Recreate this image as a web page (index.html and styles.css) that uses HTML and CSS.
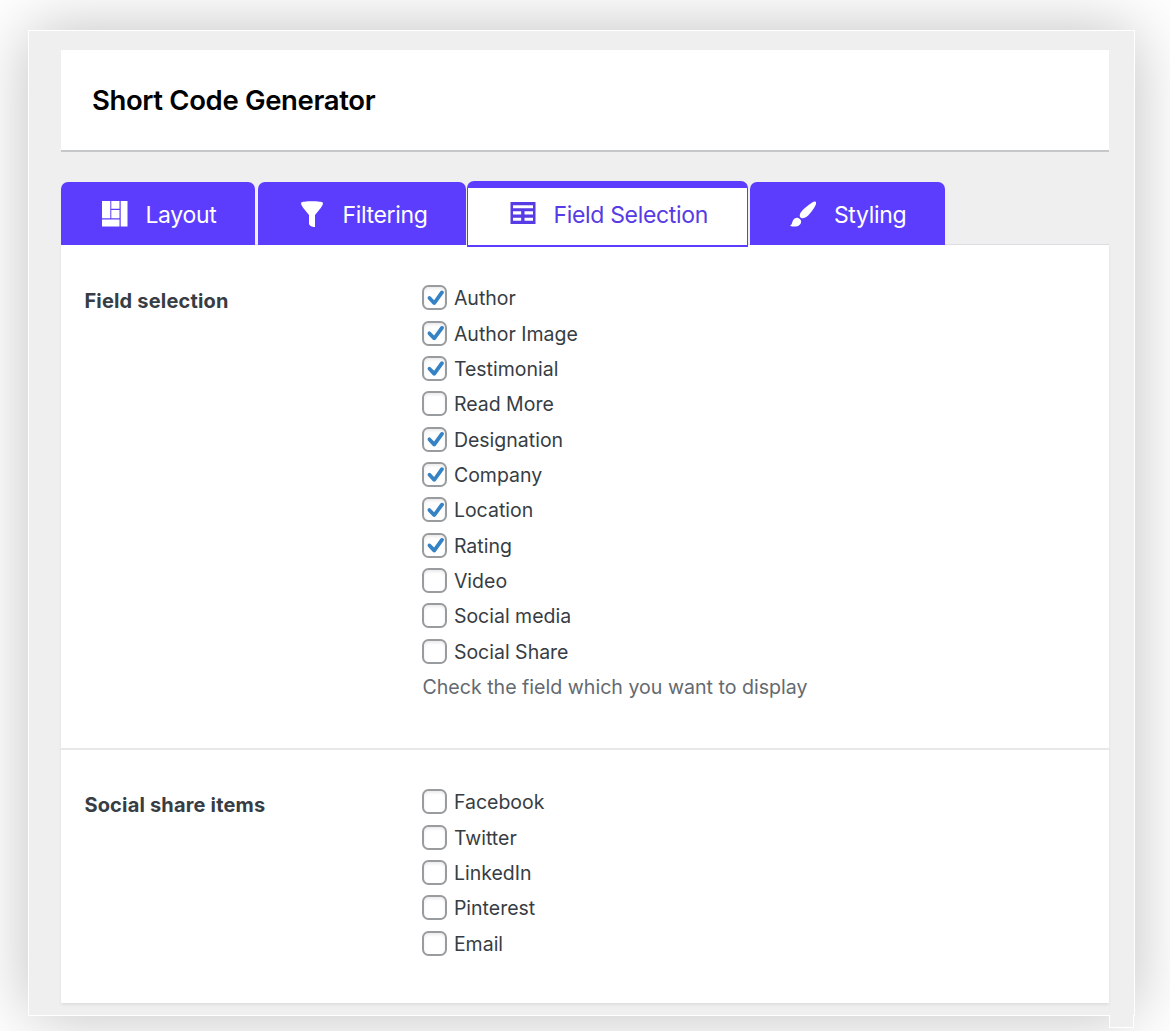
FILE: index.html
```html
<!DOCTYPE html>
<html lang="en">
<head>
<meta charset="utf-8">
<title>Short Code Generator</title>
<link rel="stylesheet" href="styles.css">
</head>
<body>
<main class="frame">
  <header class="header"><h1 class="title">Short Code Generator</h1></header>
  <nav class="tabs">
    <a class="tab tab-layout"><svg class="icon" viewBox="0 0 26 26"><path fill="currentColor" d="M0 0h8.300v17.200H0zM9.300 0h8.200v7.800H9.300zM9.300 9h8.200v8.200H9.300zM0 18.500h17.500v7H0zM18.700 0h6.800v25.500h-6.800z"/></svg><span class="tab-text">Layout</span></a>
    <a class="tab tab-filter"><svg class="icon" viewBox="0 0 26 26"><path fill="currentColor" d="M2 1.800C2-.3 24-.3 24 1.800c0 2.200-1.500 4.200-3.500 6.700L16 14v12c-3.200 0-6-1.200-6-3.500V14L5.500 8.500C3.500 6 2 4 2 1.800z"/></svg><span class="tab-text">Filtering</span></a>
    <a class="tab tab-active"><svg class="icon" viewBox="0 0 26 26"><path fill="currentColor" fill-rule="evenodd" d="M.5 2h25v22H.5zM3 5.300v3h20v-3zM3 11.300v3.200h8.200v-3.200zM14.500 11.300v3.200H23v-3.200zM3 17.700v3h8.200v-3zM14.500 17.700v3H23v-3z"/></svg><span class="tab-text">Field Selection</span></a>
    <a class="tab tab-style"><svg class="icon" viewBox="0 0 26 26"><path fill="currentColor" d="M25.600.7c1 1 .5 2.700-.6 4.600-2.400 4.300-6.200 9.500-9.700 11.300-1.200.6-2.300.9-3.500.7-1-.3-1.700-1.100-2-2.100-.2-1.300.1-2.500.9-3.700C13.200 7.900 18 4 22.200 1.400 23.700.5 24.800.1 25.600.7zM7.500 16.700c1.800.2 3.400 1.700 3.600 3.400.2 3.500-3 5.500-6.300 5.500-1.800 0-3.500-.3-4.800-.9 2-.9 1.900-2.400 2.700-4.600.8-2.200 2.500-3.600 4.800-3.400z"/></svg><span class="tab-text">Styling</span></a>
  </nav>
  <section class="panel">
    <div class="section section-fields">
      <h2 class="label">Field selection</h2>
      <div class="options">
        <label class="option"><input class="check" type="checkbox" checked><span>Author</span></label>
        <label class="option"><input class="check" type="checkbox" checked><span>Author Image</span></label>
        <label class="option"><input class="check" type="checkbox" checked><span>Testimonial</span></label>
        <label class="option"><input class="check" type="checkbox"><span>Read More</span></label>
        <label class="option"><input class="check" type="checkbox" checked><span>Designation</span></label>
        <label class="option"><input class="check" type="checkbox" checked><span>Company</span></label>
        <label class="option"><input class="check" type="checkbox" checked><span>Location</span></label>
        <label class="option"><input class="check" type="checkbox" checked><span>Rating</span></label>
        <label class="option"><input class="check" type="checkbox"><span>Video</span></label>
        <label class="option"><input class="check" type="checkbox"><span>Social media</span></label>
        <label class="option"><input class="check" type="checkbox"><span>Social Share</span></label>
        <p class="hint">Check the field which you want to display</p>
      </div>
    </div>
    <div class="section section-social">
      <h2 class="label">Social share items</h2>
      <div class="options">
        <label class="option"><input class="check" type="checkbox"><span>Facebook</span></label>
        <label class="option"><input class="check" type="checkbox"><span>Twitter</span></label>
        <label class="option"><input class="check" type="checkbox"><span>LinkedIn</span></label>
        <label class="option"><input class="check" type="checkbox"><span>Pinterest</span></label>
        <label class="option"><input class="check" type="checkbox"><span>Email</span></label>
      </div>
    </div>
  </section>
  <div class="corner"></div>
</main>
</body>
</html>
```
FILE: styles.css
```css
* { box-sizing: border-box; }
body {
  margin: 0;
  height: 1031px;
  overflow: hidden;
  background: #fff;
  font-family: Inter, "Liberation Sans", sans-serif;
  color: #373d44;
  display: flow-root;
}
.frame {
  position: relative;
  width: 1107px;
  height: 986px;
  margin: 30px 0 0 28px;
  padding: 19px 25px 0 32.400px;
  border: 1px solid #fff;
  background: #efefef;
  box-shadow: 0 0 62px rgba(0, 0, 0, .25);
}
.corner {
  position: absolute;
  left: 1080px;
  top: 984px;
  width: 25px;
  height: 13px;
  border: 1px solid #fff;
  border-top: 0;
  background: #efefef;
}
.header {
  height: 102px;
  padding-left: 30.500px;
  display: flex;
  align-items: center;
  background: #fff;
  border-bottom: 2px solid #c6c7c9;
}
.title {
  margin: 0;
  font-size: 27.500px;
  font-weight: 600;
  letter-spacing: -.35px;
  color: #000;
}
.tabs {
  display: flex;
  align-items: flex-start;
  height: 92px;
  padding-top: 30px;
}
.tab {
  height: 63px;
  display: flex;
  align-items: center;
  border-radius: 7px 7px 0 0;
  background: #5c3dfe;
  color: #fff;
  white-space: nowrap;
}
.tab-layout { width: 194px; padding-left: 41px; gap: 17px; }
.tab-filter { width: 208px; margin-left: 3px; padding-left: 41px; gap: 17px; }
.tab-style { width: 195px; margin-left: 2px; padding-left: 40px; gap: 17.500px; }
.tab-active {
  position: relative;
  width: 281px;
  height: 66px;
  margin: -1px 0 0 1px;
  padding: 0 0 6px 42px;
  gap: 17px;
  border: 1px solid #5c3dfe;
  border-top-width: 7px;
  border-bottom-width: 2px;
  background: #fff;
  color: #573be4;
}
.icon { width: 26px; height: 26px; flex: none; }
.tab-active .icon { margin-top: -1px; }
.tab-text { font-size: 23px; letter-spacing: -.32px; padding-top: 2px; }
.panel {
  height: 759px;
  background: #fff;
  border-top: 1px solid #dcdde0;
  box-shadow: 0 2px 3px rgba(0, 0, 0, .07);
}
.section {
  display: flex;
  padding: 35.600px 0 0 23px;
}
.section-fields { height: 505px; border-bottom: 2px solid #e8e8e9; }
.section-social { padding-top: 34.500px; }
.label {
  width: 338px;
  margin: 8px 0 0;
  font-size: 20px;
  line-height: 24px;
  font-weight: 700;
  letter-spacing: .18px;
}
.options { display: flex; flex-direction: column; }
.option {
  height: 35.350px;
  display: flex;
  align-items: center;
  gap: 6.500px;
  font-size: 19.500px;
}
.check {
  appearance: none;
  width: 25px;
  height: 25px;
  margin: 0 0 1px;
  border: 2px solid #999c9f;
  border-radius: 6.500px;
  background: #fff;
  box-shadow: inset 0 2px 3px rgba(0, 0, 0, .08);
}
.check:checked::before {
  content: "";
  display: block;
  width: 17px;
  height: 15px;
  margin: 3px 0 0 3px;
  background: #3582c4;
  clip-path: path("M3.200 6.300 L6.700 9.900 L13 1.100 Q14.100 -.2 15.700 .7 Q17.200 1.700 16.300 3.100 L8.300 14 Q6.800 15.500 5.300 14 L.5 8.800 Q-.4 7.200 .8 6.200 Q2.100 5.200 3.200 6.300 Z");
}
.hint {
  margin: 0;
  padding-top: 1px;
  line-height: 35px;
  font-size: 19.600px;
  color: #646a70;
}
```
